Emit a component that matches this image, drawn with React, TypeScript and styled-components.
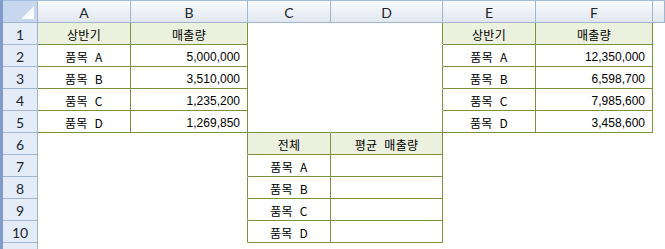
import React from 'react'
import styled, { createGlobalStyle } from 'styled-components'

const GlobalStyle = createGlobalStyle`
	html, body {
		margin: 0;
		padding: 0;
		background: #ffffff;
		overflow: hidden;
	}
`

const GREEN = '#77933c'
const HEAD_LINE = '#9eb6ce'

const Sheet = styled.div`
	display: grid;
	grid-template-columns: 35px 93px 117px 83px 112px 93px 117px 1fr;
	grid-template-rows: 23px repeat(11, 22px);
	width: 665px;
	height: 249px;
	overflow: hidden;
	border-left: 3px solid #7f9ccb;
	box-sizing: border-box;
	font-family: 'Noto Sans CJK KR', 'Liberation Sans', sans-serif;
`

const Corner = styled.div`
	position: relative;
	background: #c7d7ee;
	border-top: 1px solid #a4bcdc;
	border-right: 1px solid ${HEAD_LINE};
	border-bottom: 1px solid ${HEAD_LINE};
	box-sizing: border-box;

	&::after {
		content: '';
		position: absolute;
		right: 3px;
		bottom: 3px;
		width: 13px;
		height: 13px;
		background: linear-gradient(135deg, #e9f0f9, #ffffff);
		clip-path: polygon(100% 0, 100% 100%, 0 100%);
	}
`

const ColHead = styled.div`
	display: flex;
	align-items: center;
	justify-content: center;
	background: linear-gradient(#f9fbfd, #e1e7f0);
	border-top: 1px solid #a4bcdc;
	border-right: 1px solid ${HEAD_LINE};
	border-bottom: 1px solid ${HEAD_LINE};
	box-sizing: border-box;
	font-family: Lato, 'Liberation Sans', sans-serif;
	font-size: 14px;
	color: #202530;
	padding-top: 1px;
`

const RowHead = styled.div`
	display: flex;
	align-items: center;
	justify-content: center;
	background: #e4ecf7;
	border-right: 1px solid ${HEAD_LINE};
	border-bottom: 1px solid ${HEAD_LINE};
	box-sizing: border-box;
	font-family: Lato, 'Liberation Sans', sans-serif;
	font-size: 14px;
	color: #202530;
	padding-top: 1px;
`

const Cell = styled.div<{ $right: boolean; $bottom: boolean; $fill: boolean; $num: boolean }>`
	display: flex;
	align-items: center;
	justify-content: ${(p) => (p.$num ? 'flex-end' : 'center')};
	padding: 2px ${(p) => (p.$num ? '7px' : '0')} 0 0;
	background: ${(p) => (p.$fill ? '#ebf1de' : '#ffffff')};
	border-right: 1px solid ${(p) => (p.$right ? GREEN : 'transparent')};
	border-bottom: 1px solid ${(p) => (p.$bottom ? GREEN : 'transparent')};
	box-sizing: border-box;
	font-size: 12px;
	word-spacing: 4px;
	letter-spacing: 0.3px;
	color: #000000;
	white-space: pre;
`

const Num = styled.span`
	font-family: 'Liberation Sans', sans-serif;
	font-size: 12px;
	letter-spacing: 0;
	word-spacing: 0;
`

type Table = { r0: number; r1: number; c0: number; c1: number }

const TABLES: Table[] = [
	{ r0: 1, r1: 5, c0: 0, c1: 1 },
	{ r0: 1, r1: 5, c0: 4, c1: 5 },
	{ r0: 6, r1: 10, c0: 2, c1: 3 },
]

const inTable = (r: number, c: number) =>
	TABLES.some((t) => r >= t.r0 && r <= t.r1 && c >= t.c0 && c <= t.c1)

const isHeadRow = (r: number, c: number) =>
	TABLES.some((t) => r === t.r0 && c >= t.c0 && c <= t.c1)

const DATA: Record<string, string> = {
	'1,0': '상반기',
	'1,1': '매출량',
	'2,0': '품목 A',
	'2,1': '5,000,000',
	'3,0': '품목 B',
	'3,1': '3,510,000',
	'4,0': '품목 C',
	'4,1': '1,235,200',
	'5,0': '품목 D',
	'5,1': '1,269,850',
	'1,4': '상반기',
	'1,5': '매출량',
	'2,4': '품목 A',
	'2,5': '12,350,000',
	'3,4': '품목 B',
	'3,5': '6,598,700',
	'4,4': '품목 C',
	'4,5': '7,985,600',
	'5,4': '품목 D',
	'5,5': '3,458,600',
	'6,2': '전체',
	'6,3': '평균 매출량',
	'7,2': '품목 A',
	'8,2': '품목 B',
	'9,2': '품목 C',
	'10,2': '품목 D',
}

const COLS = ['A', 'B', 'C', 'D', 'E', 'F', '']

export default function App() {
	const rows = Array.from({ length: 11 }, (_, i) => i + 1)

	return (
		<>
			<GlobalStyle />
			<Sheet>
				<Corner />
				{COLS.map((c, i) => (
					<ColHead key={'h' + i}>{c}</ColHead>
				))}
				{rows.map((r) => (
					<React.Fragment key={r}>
						<RowHead>{r}</RowHead>
						{COLS.map((_, c) => {
							const text = DATA[`${r},${c}`] ?? ''
							const isNum = /^[\d,]+$/.test(text)
							return (
								<Cell
									key={c}
									$right={inTable(r, c) || inTable(r, c + 1)}
									$bottom={inTable(r, c) || inTable(r + 1, c)}
									$fill={isHeadRow(r, c)}
									$num={isNum}
								>
									{isNum ? <Num>{text}</Num> : text}
								</Cell>
							)
						})}
					</React.Fragment>
				))}
			</Sheet>
		</>
	)
}
